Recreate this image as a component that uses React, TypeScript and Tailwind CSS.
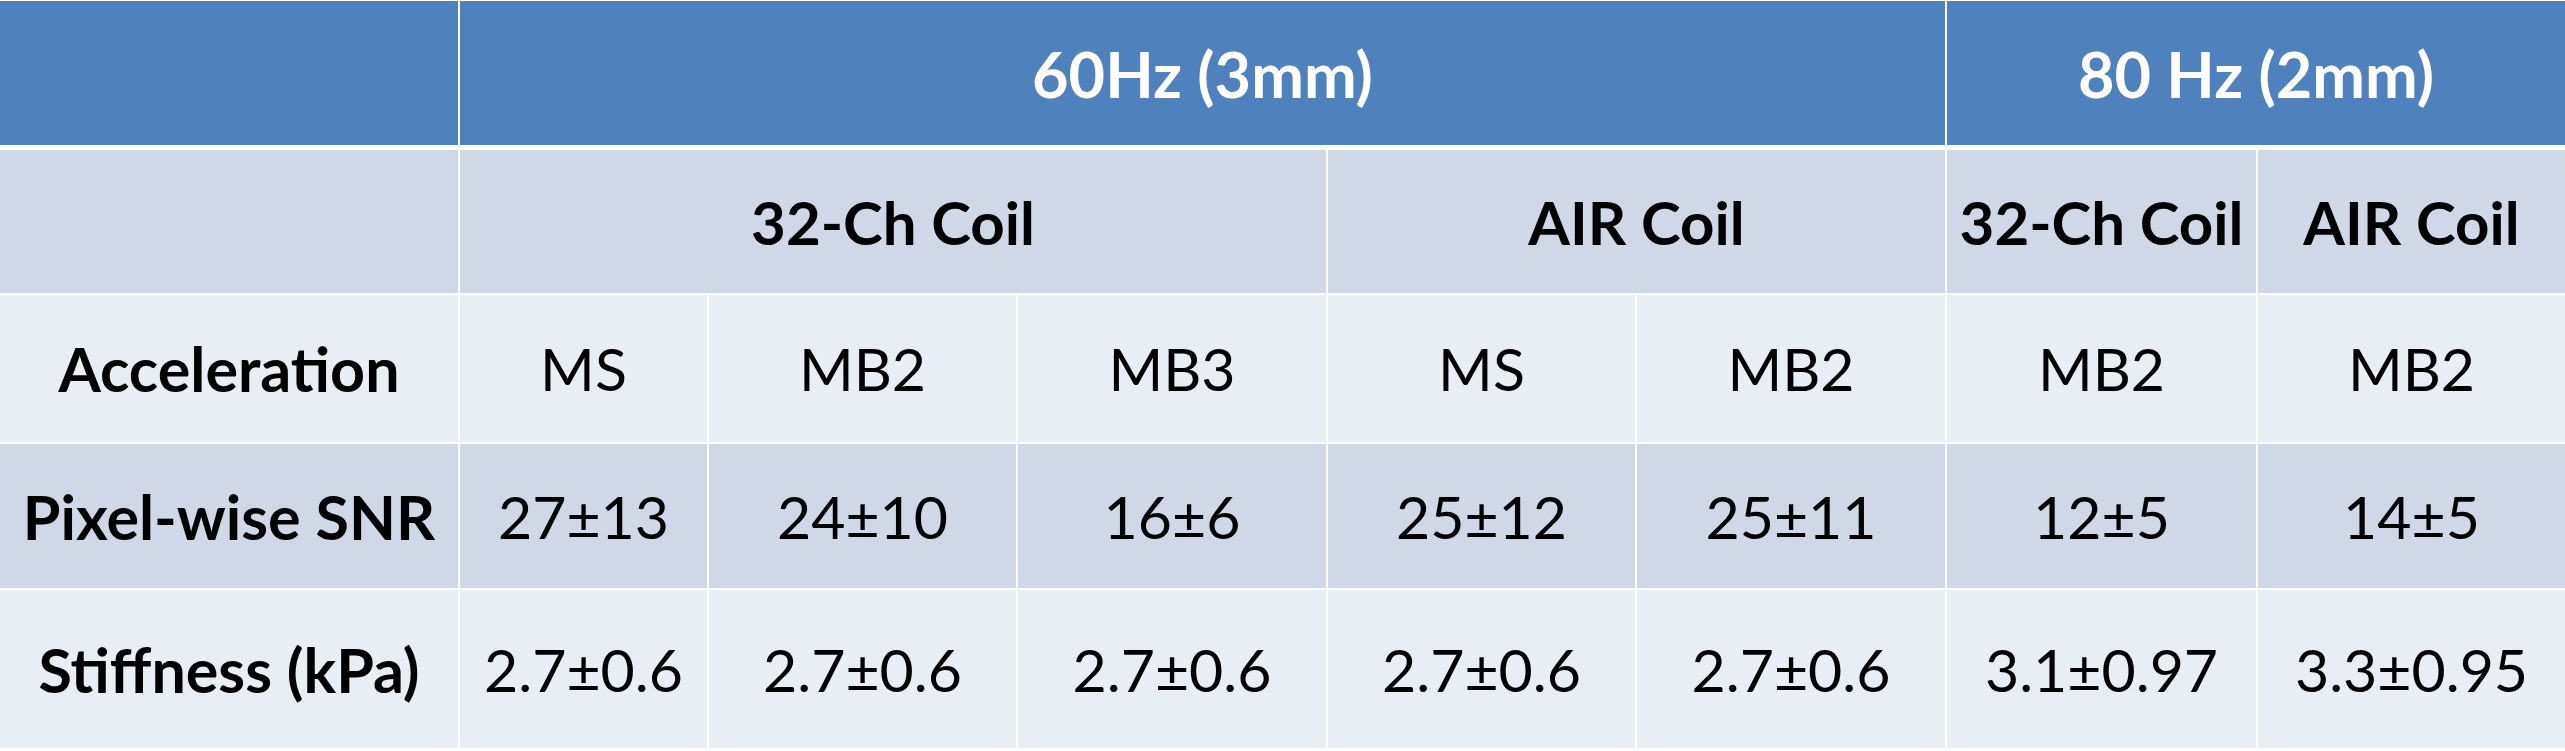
import React from "react";

const font = { fontFamily: "Lato, 'Open Sans', sans-serif" };

type Cell = { text: string; span?: string; bold?: boolean };

const rows: { bg: string; size: string; cells: Cell[] }[] = [
	{
		bg: "bg-[#d0d8e8]",
		size: "text-[60px]",
		cells: [
			{ text: "" },
			{ text: "32-Ch Coil", span: "col-span-3", bold: true },
			{ text: "AIR Coil", span: "col-span-2", bold: true },
			{ text: "32-Ch Coil", bold: true },
			{ text: "AIR Coil", bold: true },
		],
	},
	{
		bg: "bg-[#e9edf4]",
		size: "text-[61px]",
		cells: [
			{ text: "Acceleration", bold: true },
			{ text: "MS" },
			{ text: "MB2" },
			{ text: "MB3" },
			{ text: "MS" },
			{ text: "MB2" },
			{ text: "MB2" },
			{ text: "MB2" },
		],
	},
	{
		bg: "bg-[#d0d8e8]",
		size: "text-[61px]",
		cells: [
			{ text: "Pixel-wise SNR", bold: true },
			{ text: "27±13" },
			{ text: "24±10" },
			{ text: "16±6" },
			{ text: "25±12" },
			{ text: "25±11" },
			{ text: "12±5" },
			{ text: "14±5" },
		],
	},
	{
		bg: "bg-[#e9edf4]",
		size: "text-[61px]",
		cells: [
			{ text: "Stiffness (kPa)", bold: true },
			{ text: "2.7±0.6" },
			{ text: "2.7±0.6" },
			{ text: "2.7±0.6" },
			{ text: "2.7±0.6" },
			{ text: "2.7±0.6" },
			{ text: "3.1±0.97" },
			{ text: "3.3±0.95" },
		],
	},
];

export default function App() {
	return (
		<div className="w-[2565px] h-[751px] bg-white pt-[1px]" style={font}>
			<div className="grid grid-cols-[458px_247px_307px_308px_307px_308px_309px_1fr] grid-rows-[147px_143px_147px_144px_158px] gap-[2px] text-black leading-none">
				{/* header row */}
				<div className="bg-[#4f81bd] mb-[3px]" />
				<div className="col-span-5 bg-[#4f81bd] mb-[3px] flex items-center justify-center font-bold text-[63px] text-white">
					60Hz (3mm)
				</div>
				<div className="col-span-2 bg-[#4f81bd] mb-[3px] flex items-center justify-center font-bold text-[63px] text-white">
					80 Hz (2mm)
				</div>

				{rows.map((row, r) =>
					row.cells.map((cell, c) => (
						<div
							key={`${r}-${c}`}
							className={`${row.bg} ${cell.span ?? ""} ${
								cell.bold ? `font-bold ${row.size}` : "font-normal text-[59px]"
							} flex items-center justify-center whitespace-nowrap`}>
							{cell.text}
						</div>
					))
				)}
			</div>
		</div>
	);
}
